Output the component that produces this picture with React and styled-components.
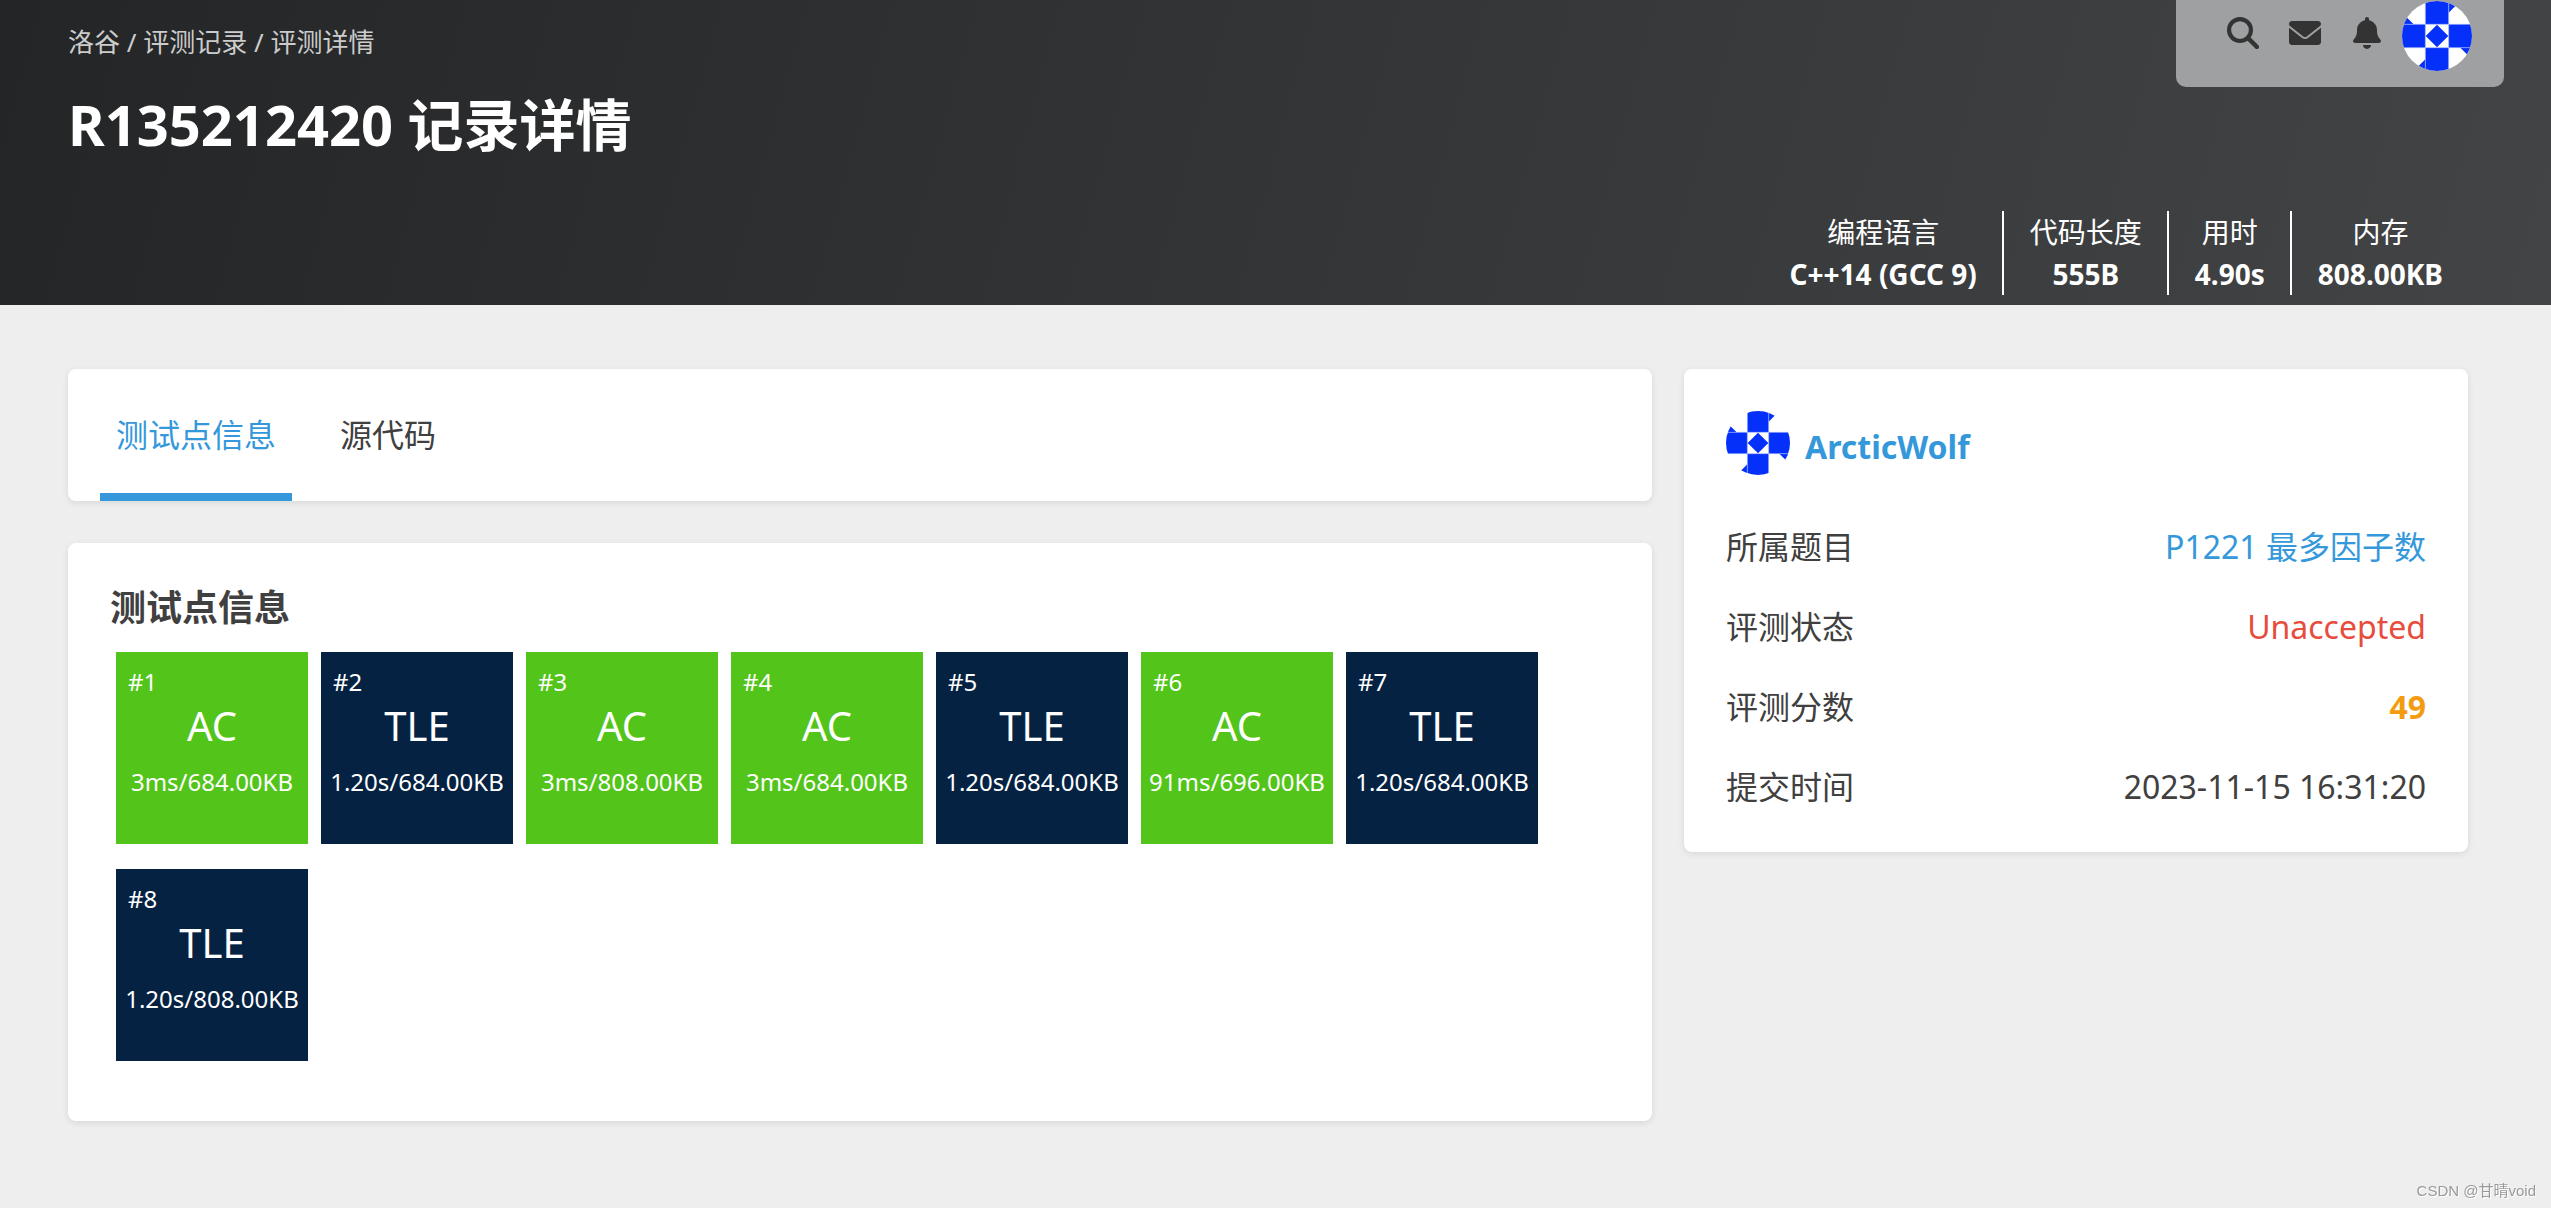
import { useState } from "react";
import styled, { createGlobalStyle } from "styled-components";
import { FaBell } from "react-icons/fa6";

const testCases = [
  { id: 1, status: "AC", info: "3ms/684.00KB" },
  { id: 2, status: "TLE", info: "1.20s/684.00KB" },
  { id: 3, status: "AC", info: "3ms/808.00KB" },
  { id: 4, status: "AC", info: "3ms/684.00KB" },
  { id: 5, status: "TLE", info: "1.20s/684.00KB" },
  { id: 6, status: "AC", info: "91ms/696.00KB" },
  { id: 7, status: "TLE", info: "1.20s/684.00KB" },
  { id: 8, status: "TLE", info: "1.20s/808.00KB" },
];

const stats = [
  { label: "编程语言", value: "C++14 (GCC 9)" },
  { label: "代码长度", value: "555B" },
  { label: "用时", value: "4.90s" },
  { label: "内存", value: "808.00KB" },
];

const tabs = ["测试点信息", "源代码"];

const SearchIcon = () => (
  <svg viewBox="0 0 512 512" fill="none" stroke="currentColor">
    <circle cx="208" cy="208" r="175" strokeWidth="66" />
    <path d="M338 338L478 478" strokeWidth="68" strokeLinecap="round" />
  </svg>
);

const MailIcon = () => (
  <svg viewBox="0 0 512 512" fill="currentColor">
    <path d="M256 352c-16.5 0-33.1-5.4-47.2-16.4L0 173.2V400c0 26.5 21.5 48 48 48h416c26.5 0 48-21.5 48-48V173.2L303.2 335.6C289.1 346.6 272.5 352 256 352zM16.3 145.3l212.2 165.1c16.2 12.6 38.9 12.6 55.1 0l212.2-165.1C505.1 137.3 512 125 512 112c0-26.5-21.5-48-48-48H48C21.5 64 0 85.5 0 112c0 13 6 25.3 16.3 33.3z" />
  </svg>
);

const Avatar = ({ size }) => (
  <StyledAvatar $size={size} viewBox="0 0 210 210" role="img" aria-label="ArcticWolf">
    <rect width="210" height="210" fill="#fff" />
    <g fill="#0530fa">
      <path d="M70 0h70v70h-70zM70 140h70v70h-70zM0 70h70v70h-70zM140 70h70v70h-70z" />
      <path d="M105 71l34 34-34 34-34-34z" />
      <path d="M0 35l35 35H0zM140 0h35l-35 35zM175 140h35v35zM70 175v35H35z" />
    </g>
    <path d="M70 0v210M140 0v210M0 70h210M0 140h210" stroke="#a9bbfd" strokeWidth="2" />
  </StyledAvatar>
);

export default function App() {
  const [activeTab, setActiveTab] = useState(tabs[0]);

  return (
    <>
      <GlobalStyle />
      <Header>
        <Breadcrumb>
          <a href="#home">洛谷</a> / <a href="#records">评测记录</a> / 评测详情
        </Breadcrumb>
        <Title>R135212420 记录详情</Title>
        <Stats>
          {stats.map((stat) => (
            <Stat key={stat.label}>
              <dt>{stat.label}</dt>
              <dd>{stat.value}</dd>
            </Stat>
          ))}
        </Stats>
        <UserNav>
          <NavIcons>
            <IconButton aria-label="搜索">
              <SearchIcon />
            </IconButton>
            <IconButton aria-label="私信">
              <MailIcon />
            </IconButton>
            <IconButton aria-label="通知">
              <FaBell />
            </IconButton>
          </NavIcons>
          <Avatar size={70} />
        </UserNav>
      </Header>

      <Main>
        <Column>
          <TabCard>
            {tabs.map((tab) => (
              <Tab
                key={tab}
                $active={tab === activeTab}
                onClick={() => setActiveTab(tab)}
              >
                {tab}
              </Tab>
            ))}
          </TabCard>

          <ResultCard>
            <h2>测试点信息</h2>
            <CaseList>
              {testCases.map((item) => (
                <Case key={item.id} $accepted={item.status === "AC"}>
                  <CaseId>#{item.id}</CaseId>
                  <CaseStatus>{item.status}</CaseStatus>
                  <CaseInfo>{item.info}</CaseInfo>
                </Case>
              ))}
            </CaseList>
          </ResultCard>
        </Column>

        <InfoCard>
          <User>
            <Avatar size={64} />
            <a href="#user">ArcticWolf</a>
          </User>
          <InfoList>
            <InfoRow>
              <dt>所属题目</dt>
              <InfoValue $color="#3498db">
                <a href="#problem">P1221 最多因子数</a>
              </InfoValue>
            </InfoRow>
            <InfoRow>
              <dt>评测状态</dt>
              <InfoValue $color="#e74c3c">Unaccepted</InfoValue>
            </InfoRow>
            <InfoRow>
              <dt>评测分数</dt>
              <InfoValue $color="#f39c11" $bold>
                49
              </InfoValue>
            </InfoRow>
            <InfoRow>
              <dt>提交时间</dt>
              <InfoValue>2023-11-15 16:31:20</InfoValue>
            </InfoRow>
          </InfoList>
        </InfoCard>
      </Main>

      <Watermark>CSDN @甘晴void</Watermark>
    </>
  );
}

const GlobalStyle = createGlobalStyle`
  * {
    box-sizing: border-box;
  }

  body {
    margin: 0;
    background-color: #eeeeee;
    color: #404040;
    font-family: "Noto Sans", "Noto Sans CJK SC", sans-serif;
    font-size: 32px;
  }

  h1, h2, dl, dd, p {
    margin: 0;
  }

  a {
    color: inherit;
    text-decoration: none;
  }

  button {
    padding: 0;
    border: none;
    background: none;
    font: inherit;
    color: inherit;
    cursor: pointer;
  }
`;

const Header = styled.header`
  position: relative;
  display: flex;
  flex-direction: column;
  padding: 22px 83px 10px 68px;
  background: linear-gradient(105deg, #232526, #434446);
  color: white;
`;

const Breadcrumb = styled.nav`
  font-size: 26px;
  line-height: 40px;
  color: #cccccc;
`;

const Title = styled.h1`
  margin-top: 20px;
  font-size: 56px;
  line-height: 84px;
`;

const Stats = styled.dl`
  display: flex;
  justify-content: flex-end;
  margin-top: 45px;
`;

const Stat = styled.div`
  padding: 0 25px 0 26px;
  font-size: 28px;
  line-height: 42px;
  text-align: center;

  & + & {
    border-left: 2px solid white;
  }

  dd {
    font-weight: bold;
  }
`;

/* floats over the top right corner of the header */
const UserNav = styled.div`
  position: absolute;
  top: 0;
  right: 47px;
  display: flex;
  align-items: flex-start;
  gap: 19px;
  padding: 1px 32px 16px 51px;
  border-radius: 0 0 10px 10px;
  background-color: #9fa0a1;
  color: #333333;
`;

const NavIcons = styled.div`
  display: flex;
  gap: 30px;
  padding-top: 16px;
`;

const IconButton = styled.button`
  display: flex;

  svg {
    width: 32px;
    height: 32px;
  }
`;

const StyledAvatar = styled.svg`
  display: block;
  flex-shrink: 0;
  width: ${({ $size }) => $size}px;
  height: ${({ $size }) => $size}px;
  border-radius: 50%;
`;

const Main = styled.main`
  display: grid;
  grid-template-columns: 1584fr 784fr;
  align-items: start;
  gap: 32px;
  padding: 64px 83px 64px 68px;
`;

const Column = styled.div`
  display: flex;
  flex-direction: column;
  gap: 42px;
`;

const Card = styled.section`
  border-radius: 8px;
  background-color: white;
  box-shadow: 0 2px 6px rgba(26, 26, 26, 0.1);
`;

const TabCard = styled(Card)`
  display: flex;
  gap: 32px;
  padding: 0 32px;
`;

const Tab = styled.button`
  padding: 42px 16px 34px;
  border-bottom: 8px solid ${({ $active }) => ($active ? "#3498db" : "transparent")};
  line-height: 48px;
  color: ${({ $active }) => ($active ? "#3498db" : "inherit")};
`;

const ResultCard = styled(Card)`
  padding: 38px 42px 60px;

  h2 {
    font-size: 36px;
    line-height: 54px;
  }
`;

const CaseList = styled.div`
  display: flex;
  flex-wrap: wrap;
  gap: 25px 13px;
  margin-top: 17px;
  padding: 0 6px;
`;

const Case = styled.div`
  width: 192px;
  height: 192px;
  padding-top: 12px;
  background-color: ${({ $accepted }) => ($accepted ? "#52c41a" : "#052242")};
  color: white;
  text-align: center;
`;

const CaseId = styled.p`
  padding-left: 12px;
  font-size: 24px;
  line-height: 36px;
  text-align: left;
`;

const CaseStatus = styled.p`
  font-size: 40px;
  line-height: 52px;
`;

const CaseInfo = styled.p`
  font-size: 24px;
  line-height: 60px;
  white-space: nowrap;
`;

const InfoCard = styled(Card)`
  padding: 42px 42px 25px;
`;

const User = styled.div`
  display: flex;
  gap: 15px;
  line-height: 72px;
  font-weight: bold;
  color: #3498db;
`;

const InfoList = styled.dl`
  margin-top: 24px;
`;

const InfoRow = styled.div`
  display: flex;
  justify-content: space-between;
  line-height: 80px;
`;

const InfoValue = styled.dd`
  font-weight: ${({ $bold }) => ($bold ? "bold" : "normal")};
  color: ${({ $color }) => $color || "inherit"};
`;

const Watermark = styled.small`
  position: fixed;
  right: 15px;
  bottom: 5px;
  font-family: "Liberation Sans", "Noto Sans CJK SC", sans-serif;
  font-size: 15px;
  line-height: 24px;
  color: #999999;
  text-shadow: 1px 1px 0 white;
`;
